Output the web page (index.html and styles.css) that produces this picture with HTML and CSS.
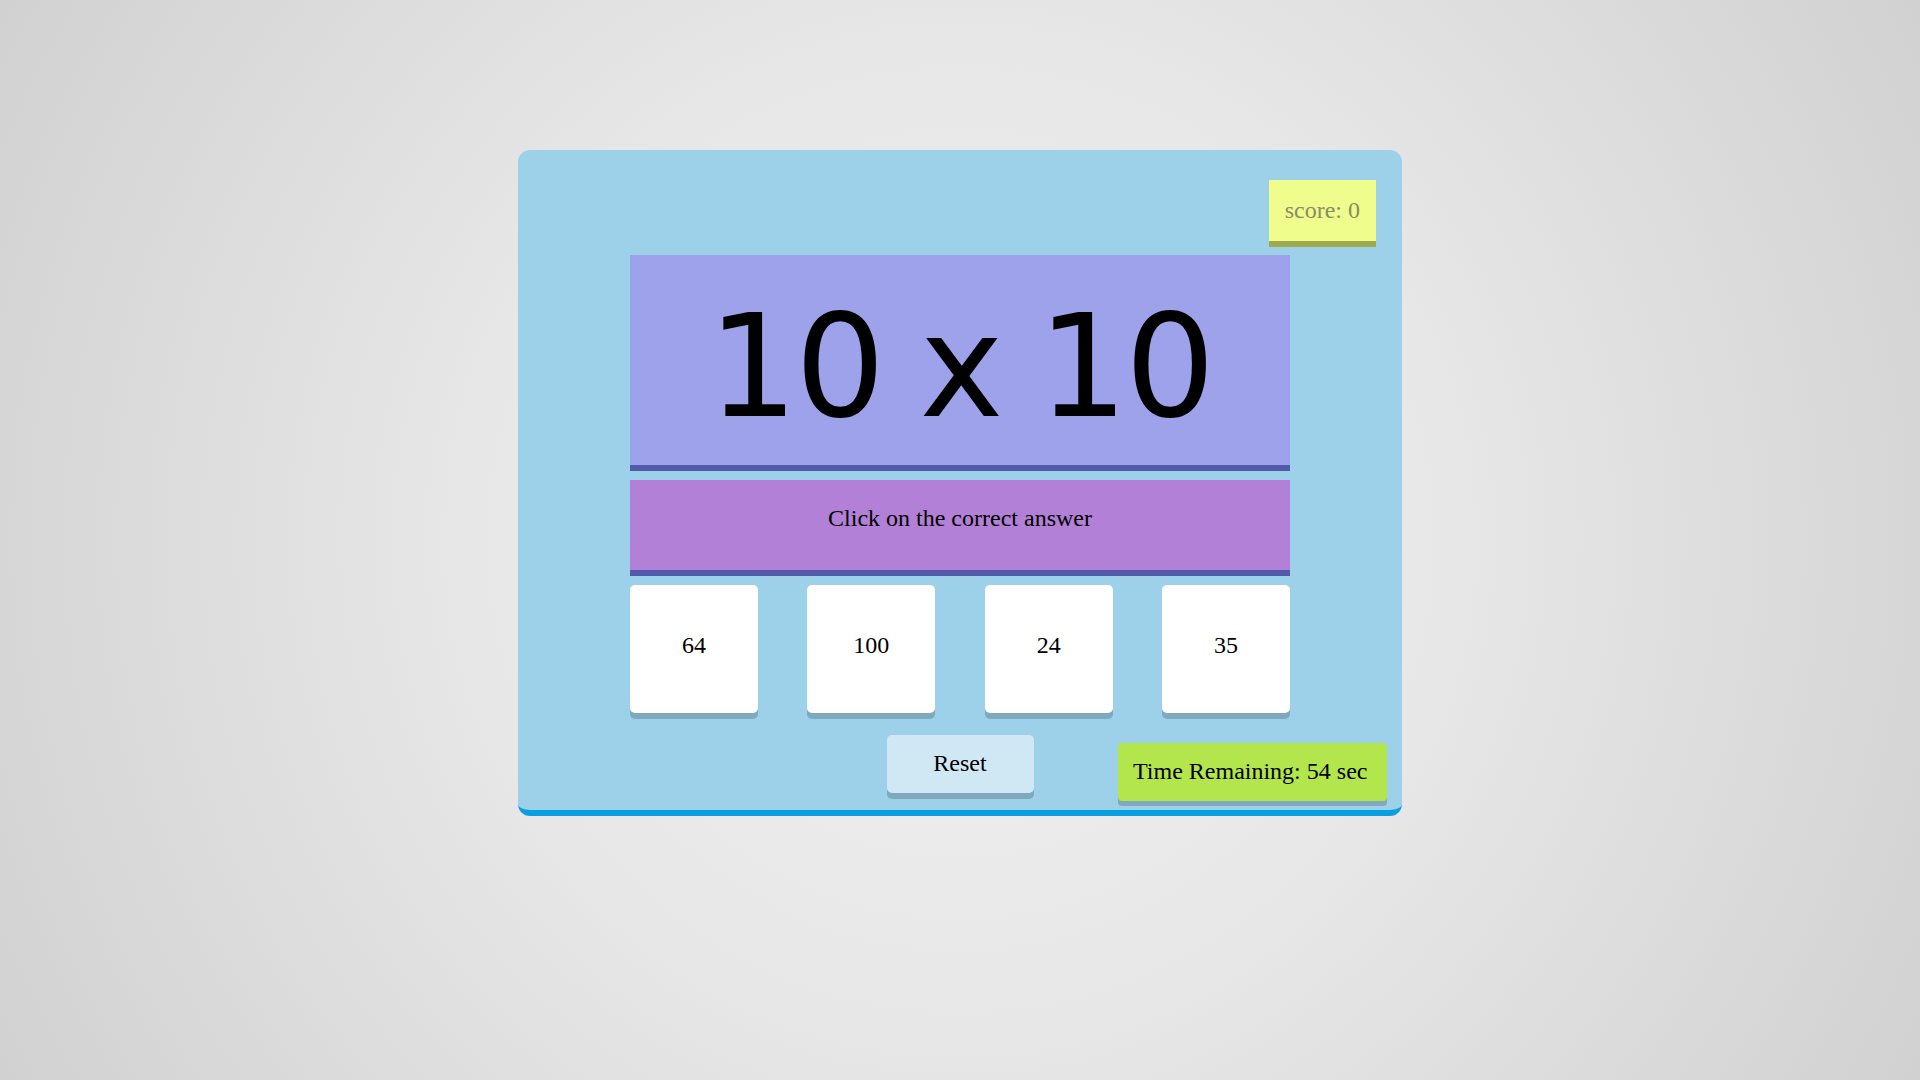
FILE: index.html
```html
<!DOCTYPE html>
<html lang="en">
<head>
<meta charset="utf-8">
<title>Multiplication Game</title>
<link rel="stylesheet" href="styles.css">
</head>
<body>
  <div class="game">
    <div class="score">score: <span class="score-value">0</span></div>
    <div class="question">10 x 10</div>
    <div class="instruction">Click on the correct answer</div>
    <div class="answers">
      <div class="answer">64</div>
      <div class="answer">100</div>
      <div class="answer">24</div>
      <div class="answer">35</div>
    </div>
    <div class="reset">Reset</div>
    <div class="timer">Time Remaining: <span class="time-value">54</span> sec</div>
  </div>
</body>
</html>
```

FILE: styles.css
```css
html, body {
  margin: 0;
  padding: 0;
  min-height: 100vh;
}

body {
  background: radial-gradient(circle at center, #f1f1f1 0%, #e7e7e7 45%, #d1d1d1 100%);
  font-family: "Liberation Serif", "Times New Roman", serif;
  font-size: 24px;
  line-height: 27px;
  color: #000;
  overflow: hidden;
}

.game {
  position: relative;
  box-sizing: border-box;
  width: 884px;
  margin: 150px auto 0;
  padding: 105px 0 17px;
  background: #9dd1ea;
  border-bottom: 6px solid #0a9fe0;
  border-radius: 12px;
  display: flex;
  flex-direction: column;
  align-items: center;
}

.score {
  position: absolute;
  top: 30px;
  right: 26px;
  padding: 17px 16px;
  background: #effd8d;
  color: #8a8c64;
  box-shadow: 0 6px 0 #9faa4f;
}

.question {
  box-sizing: border-box;
  width: 660px;
  height: 216px;
  padding-top: 14px;
  background: #9da2ea;
  border-bottom: 6px solid #535aab;
  display: flex;
  align-items: center;
  justify-content: center;
  font-family: "Comic Sans MS", "DejaVu Sans", sans-serif;
  font-size: 142px;
  line-height: 142px;
  letter-spacing: -3px;
  word-spacing: -5px;
}

.instruction {
  box-sizing: border-box;
  width: 660px;
  height: 96px;
  margin-top: 9px;
  background: #b380d7;
  border-bottom: 6px solid #535aab;
  display: flex;
  align-items: center;
  justify-content: center;
  padding-bottom: 13px;
}

.answers {
  width: 660px;
  margin-top: 9px;
  display: flex;
  justify-content: space-between;
}

.answer {
  box-sizing: border-box;
  width: 128px;
  height: 128px;
  padding-top: 47px;
  background: #fff;
  border-radius: 5px;
  text-align: center;
  box-shadow: 0 6px 0 #7ea9bf;
}

.reset {
  box-sizing: border-box;
  width: 147px;
  margin-top: 22px;
  padding: 15px 0 16px;
  background: #cfe8f4;
  border-radius: 5px;
  text-align: center;
  box-shadow: 0 6px 0 #7ea9bf;
}

.timer {
  position: absolute;
  right: 15px;
  bottom: 9px;
  box-sizing: border-box;
  width: 269px;
  padding: 15px 0 16px 15px;
  background: #b2e64c;
  border-radius: 4px;
  box-shadow: 0 5px 0 #7ea9bf;
}
```
